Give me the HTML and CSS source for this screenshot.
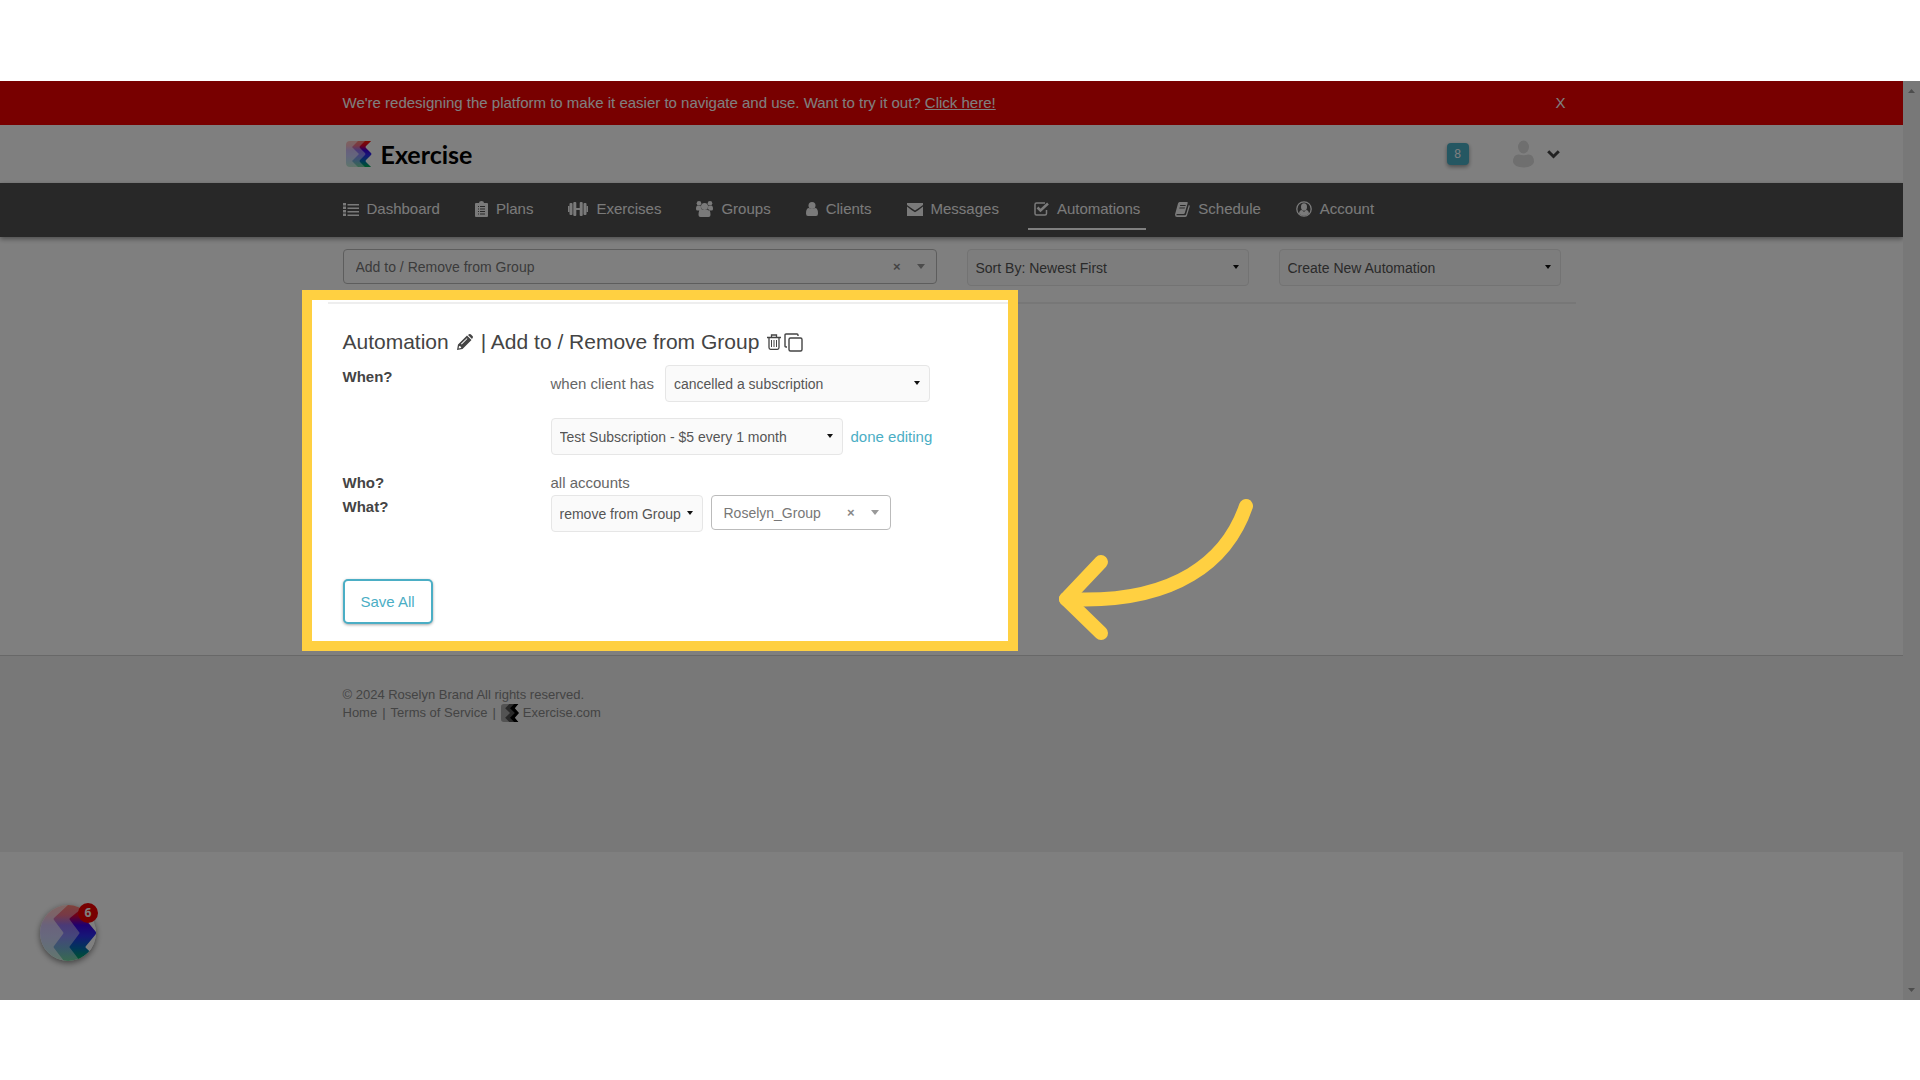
FILE: index.html
```html
<!DOCTYPE html>
<html lang="en">
<head>
<meta charset="utf-8">
<meta name="viewport" content="width=device-width, initial-scale=1">
<title>Automations</title>
<link rel="stylesheet" href="styles.css">
</head>
<body>
<svg class="defs" aria-hidden="true">
  <defs>
    <linearGradient id="brand" x1="0" y1="0" x2="0" y2="1">
      <stop offset="0" stop-color="#ff1a00"/>
      <stop offset=".18" stop-color="#e00030"/>
      <stop offset=".36" stop-color="#3d00e0"/>
      <stop offset=".55" stop-color="#2c2cf0"/>
      <stop offset=".78" stop-color="#0070b0"/>
      <stop offset="1" stop-color="#00b050"/>
    </linearGradient>
  </defs>
</svg>
<div class="app">
  <div class="page">
    <div class="banner">
      <div class="container banner-row">
        <p class="banner-text">We're redesigning the platform to make it easier to navigate and use. Want to try it out? <a href="#">Click here!</a></p>
        <button class="banner-close" type="button" aria-label="Close">X</button>
      </div>
    </div>

    <header class="header">
      <div class="container header-row">
        <a class="logo" href="#">
          <svg width="26" height="26" viewBox="0 0 26 26" fill="url(#brand)" aria-hidden="true">
            <path opacity=".25" d="M4 0H25L18 6 25 13 18 20 25 26H4Q0 26 0 22V4Q0 0 4 0Z"/>
            <path opacity=".4" d="M12 0H25L18 6 25 13 18 20 25 26H12L6 20 13 13 6 6Z"/>
            <path d="M19 0H25L20 5 Q19 6 20 7L25 12Q26 13 25 14L20 19Q19 20 20 21L25 26H19L14 21Q13 20 14 19L19 14Q20 13 19 12L14 7Q13 6 14 5Z"/>
          </svg>
          <span>Exercise</span>
        </a>
        <div class="header-tools">
          <button class="count" type="button">8</button>
          <button class="user" type="button" aria-label="User menu">
            <svg width="21" height="28" viewBox="0 0 21 28" fill="#dedede"><ellipse cx="10.500" cy="7" rx="5.500" ry="6.500"/><path d="M0 22Q0 14 6 14.500Q10 16 15 14.500Q21 14 21 22Q20 27 10.500 27.500Q1 27 0 22Z"/></svg>
            <svg width="13" height="9" viewBox="0 0 13 9" fill="none" stroke="#444" stroke-width="3"><path d="M1.200 1.200 6.500 6.500 11.800 1.200"/></svg>
          </button>
        </div>
      </div>
    </header>

    <nav class="nav">
      <div class="container nav-row">
        <a href="#"><svg width="16" height="13" viewBox="0 0 16 13" fill="currentColor"><path d="M0 0h3v2.500H0zM0 3.500h3V6H0zM0 7h3v2.500H0zM0 10.500h3V13H0zM4.500 1h11.500v1.500H4.500zM4.500 4.500h11.500v1.500H4.500zM4.500 8h11.500v1.500H4.500zM4.500 11.500h11.500v1.500H4.500z"/></svg>Dashboard</a>
        <a href="#"><svg width="13" height="16" viewBox="0 0 13 16" fill="currentColor"><path fill-rule="evenodd" d="M1 2H4Q4 0 6.500 0T9 2H12Q13 2 13 3V15Q13 16 12 16H1Q0 16 0 15V3Q0 2 1 2ZM3 5V6H4V5ZM5 5V6H10V5ZM3 7.500V8.500H4V7.500ZM5 7.500V8.500H10V7.500ZM3 10V11H4V10ZM5 10V11H10V10ZM3 12.500V13.500H4V12.500ZM5 12.500V13.500H10V12.500Z"/></svg>Plans</a>
        <a href="#"><svg width="20" height="14" viewBox="0 0 20 14" fill="currentColor"><rect y="4" width="1.500" height="6"/><rect x="1.500" y="1" width="3" height="12" rx="1"/><rect x="5.300" width="3" height="14" rx="1"/><rect x="8" y="6" width="4" height="2"/><rect x="11.700" width="3" height="14" rx="1"/><rect x="15.500" y="1" width="3" height="12" rx="1"/><rect x="18.500" y="4" width="1.500" height="6"/></svg>Exercises</a>
        <a href="#"><svg width="17" height="16" viewBox="0 0 17 16" fill="currentColor"><circle cx="3" cy="2.300" r="2.300"/><circle cx="14" cy="2.300" r="2.300"/><circle cx="8.500" cy="5.500" r="3.500"/><path d="M0 8Q0 4.300 2 4.500 3.500 5.200 4.800 4.500 4.500 7 6 8.700L4 9.500H1.500Q0 9.500 0 8ZM17 8Q17 4.300 15 4.500 13.500 5.200 12.200 4.500 12.500 7 11 8.700L13 9.500H15.500Q17 9.500 17 8ZM2.500 14Q2.500 8 5.500 8.200 8.500 10 11.500 8.200 14.500 8 14.500 14 14.500 16 12.500 16H4.500Q2.500 16 2.500 14Z"/></svg>Groups</a>
        <a href="#"><svg width="12" height="14" viewBox="0 0 12 14" fill="currentColor"><circle cx="6" cy="3.500" r="3.500"/><path d="M0 11.500Q0 6 3 6 6 8 9 6 12 6 12 11.500 12 14 10 14H2Q0 14 0 11.500Z"/></svg>Clients</a>
        <a href="#"><svg width="16" height="13" viewBox="0 0 16 13" fill="currentColor"><path d="M0 0H16V2Q12 5 8 7.500 4 5 0 2ZM0 3.500Q4 7 8 9.300 12 7 16 3.500V13H0Z"/></svg>Messages</a>
        <a class="active" href="#" aria-current="page"><svg width="15" height="14" viewBox="0 0 15 14" fill="none" stroke="currentColor"><path stroke-width="1.500" d="M12.500 8V11.500Q12.500 13 11 13H2.500Q1 13 1 11.500V2.500Q1 1 2.500 1H11"/><path stroke-width="2.500" d="M3.500 5.500 6.500 8.500 14 1.500"/></svg>Automations</a>
        <a href="#"><svg width="15" height="15" viewBox="0 0 15 15" fill="currentColor"><path fill-rule="evenodd" d="M4.500 0H12Q13 0 12.700 1L9.800 11Q9.500 12 8.500 12H2Q1 12.300 1.500 13.200H10Q10.700 13.200 11 12.400L13.800 3Q15 3 14.700 4.500L12 13.500Q11.500 15 10 15H2Q0 15 0 12.500L3 1.500Q3.500 0 4.500 0ZM5.200 3 5 4H10.500L10.800 3ZM4.500 5.500 4.200 6.500H9.700L10 5.500Z"/></svg>Schedule</a>
        <a href="#"><svg width="16" height="16" viewBox="0 0 16 16" fill="currentColor"><circle cx="8" cy="8" r="7.200" fill="none" stroke="currentColor" stroke-width="1.300"/><ellipse cx="8" cy="6" rx="3" ry="3.700"/><path d="M3 12.700Q3.200 9.300 6 9L8 11 10 9Q12.800 9.300 13 12.700 8 17 3 12.700Z"/></svg>Account</a>
      </div>
    </nav>

    <main class="container main">
      <div class="filters">
        <div class="combo combo-wide">
          <select aria-label="Automation"><option>Add to / Remove from Group</option></select>
          <button class="combo-clear" type="button" aria-label="Clear">×</button>
        </div>
        <div class="pick pick-third"><select aria-label="Sort by"><option>Sort By: Newest First</option></select></div>
        <div class="pick pick-third"><select aria-label="Create"><option>Create New Automation</option></select></div>
      </div>

      <section class="automation">
        <h1 class="title">Automation
          <button type="button" aria-label="Rename"><svg width="16" height="16" viewBox="0 0 16 16" fill="#444"><path fill-rule="evenodd" d="M0 16 1 10.500 10 1.500 14.500 6 5.500 15ZM2 12.200 1.600 14.400 3.800 14 4.300 13.200 3.500 12.500 2.800 12ZM4 9.700 4.700 10.400 10.400 4.800 9.800 4.200ZM11 1 12 0.300Q13 -.4 14 .5L15.500 2Q16.400 3 15.600 4L15 5Z"/></svg></button>
          <span>| Add to / Remove from Group</span>
          <button type="button" aria-label="Delete"><svg width="14" height="16" viewBox="0 0 14 16" fill="none" stroke="#444"><path stroke-width="1.300" d="M0 3.500H14M4.500 3.500V1H9.500V3.500M2 3.500V13.500Q2 15.300 3.500 15.300H10.500Q12 15.300 12 13.500V3.500"/><path d="M4.500 6V13M7 6V13M9.500 6V13"/></svg></button>
          <button type="button" aria-label="Duplicate"><svg width="19" height="19" viewBox="0 0 19 19" fill="none" stroke="#444" stroke-width="1.400"><rect x="5" y="5" width="13" height="13" rx="1.500"/><path d="M3 14H2Q1 14 1 13V2Q1 1 2 1H13Q14 1 14 2V3"/></svg></button>
        </h1>
        <form class="rules">
          <div class="rule">
            <strong class="rule-name">When?</strong>
            <div class="rule-body">
              <div class="line">
                <label for="event">when client has</label>
                <div class="pick pick-event"><select id="event"><option>cancelled a subscription</option></select></div>
              </div>
              <div class="line">
                <div class="pick pick-plan"><select aria-label="Subscription"><option>Test Subscription - $5 every 1 month</option></select></div>
                <a class="done" href="#">done editing</a>
              </div>
            </div>
          </div>
          <div class="rule">
            <strong class="rule-name">Who?</strong>
            <div class="rule-body">all accounts</div>
          </div>
          <div class="rule">
            <strong class="rule-name">What?</strong>
            <div class="rule-body line line-top">
              <div class="pick pick-action"><select aria-label="Action"><option>remove from Group</option></select></div>
              <div class="combo combo-group">
                <select aria-label="Group"><option>Roselyn_Group</option></select>
                <button class="combo-clear" type="button" aria-label="Clear">×</button>
              </div>
            </div>
          </div>
          <button class="save" type="button">Save All</button>
        </form>

        <div class="spotlight"></div>
        <svg class="pointer" width="202" height="148" viewBox="0 0 202 148" fill="none" stroke="#ffd041" stroke-width="14" stroke-linecap="round" stroke-linejoin="round" aria-hidden="true">
          <path d="M191 10C173 63 122 109 11 103"/>
          <path d="M46 66 11 103 46 137"/>
        </svg>
      </section>
    </main>

    <footer class="footer">
      <div class="container">
        <p>© 2024 Roselyn Brand All rights reserved.</p>
        <p class="footer-links"><a href="#">Home</a> | <a href="#">Terms of Service</a> | <a class="footer-brand" href="#"><svg width="18" height="18" viewBox="0 0 26 26" aria-hidden="true"><path opacity=".3" d="M4 0H25L18 6 25 13 18 20 25 26H4Q0 26 0 22V4Q0 0 4 0Z"/><path opacity=".5" d="M12 0H25L18 6 25 13 18 20 25 26H12L6 20 13 13 6 6Z"/><path d="M19 0H25L20 6 26 13 20 20 25 26H19L13 20 20 13 13 6Z"/></svg> Exercise.com</a></p>
      </div>
    </footer>

    <button class="chat" type="button" aria-label="Open chat">
      <svg width="56" height="56" viewBox="0 0 56 56" fill="url(#brand)" aria-hidden="true">
        <clipPath id="disc"><circle cx="28" cy="28" r="28"/></clipPath>
        <g clip-path="url(#disc)">
          <rect width="56" height="56" fill="#fff"/>
          <path opacity=".22" d="M0 0H46L30 14 46 28 30 42 46 56H0Z"/>
          <path opacity=".42" d="M28 0H46L30 14 46 28 30 42 46 56H24L14 43Q13 42 14 41L23 29Q24 28 23 27L14 15Q13 14 14 13Z"/>
          <path d="M46 0H60L46 13Q45 14 46 15L56 27V29L46 41Q45 42 46 43L60 56H40L30 43Q29 42 30 41L39 29Q40 28 39 27L30 15Q29 14 30 13Z"/>
        </g>
      </svg>
      <span class="chat-count">6</span>
    </button>
  </div>
  <div class="scrollbar" aria-hidden="true">
    <svg width="7" height="4" viewBox="0 0 7 4" fill="#9a9a9a"><path d="M0 4 3.500 0 7 4Z"/></svg>
    <svg width="7" height="4" viewBox="0 0 7 4" fill="#9a9a9a"><path d="M0 0 3.500 4 7 0Z"/></svg>
  </div>
</div>
</body>
</html>
```
FILE: styles.css
```css
* { box-sizing: border-box; }

body {
  margin: 0;
  padding: 81px 0 80px;
  background: #fff;
  color: #666;
  font: 15px/24px "Liberation Sans", Arial, sans-serif;
}

button, select { font: inherit; color: inherit; }
button { padding: 0; border: 0; background: none; }
a { color: inherit; text-decoration: none; }
p, h1 { margin: 0; }
svg { flex: none; }
.defs { position: absolute; width: 0; height: 0; }

.app {
  position: relative;
  display: flex;
  min-height: calc(100vh - 161px);
  overflow: hidden;
}
.page { flex: 1; min-width: 0; }
.container {
  max-width: 1248px;
  margin: 0 auto;
  padding: 0 15px;
}

.scrollbar {
  display: flex;
  flex-direction: column;
  align-items: center;
  justify-content: space-between;
  width: 17px;
  padding: 8px 0;
  background: #f1f1f1;
}

/* Banner */
.banner { background: #f00000; color: #fff; }
.banner-row {
  display: flex;
  justify-content: space-between;
  align-items: center;
  height: 44px;
}
.banner-text a { text-decoration: underline; }
.banner-close { margin-right: -5px; }

/* Header */
.header-row {
  display: flex;
  justify-content: space-between;
  align-items: center;
  height: 58px;
}
.logo {
  display: flex;
  align-items: center;
  gap: 9px;
  padding-left: 3px;
  color: #000;
  font: 700 25px/30px Lato, sans-serif;
}
.header-tools {
  display: flex;
  align-items: center;
  gap: 44px;
  padding-right: 1px;
}
.user { display: flex; align-items: center; gap: 13px; }
.count {
  width: 22px;
  height: 22px;
  border-radius: 4px;
  background: #4baec5;
  color: #fff;
  font-size: 12px;
  line-height: 22px;
  box-shadow: 0 2px 4px rgba(0, 0, 0, .4);
}

/* Navigation */
.nav {
  background: #505050;
  color: #f5f5f5;
  box-shadow: 0 2px 5px rgba(0, 0, 0, .4);
}
.nav-row { display: flex; gap: 23px; height: 54px; }
.nav-row a {
  display: flex;
  align-items: center;
  gap: 8px;
  height: 47px;
  padding: 7px 6px 0;
  border-bottom: 2px solid transparent;
}
.nav-row a:first-child { margin-left: -6px; }
.nav-row .active { border-color: #fff; }

/* Drop-downs */
.pick, .combo { position: relative; }
.pick select, .combo select {
  display: block;
  width: 100%;
  appearance: none;
  border-radius: 4px;
  font-size: 14px;
}
.pick select {
  height: 37px;
  padding: 0 8px;
  border: 1px solid #e6e6e6;
  background: #fafafa;
  color: #555;
}
.combo select {
  height: 35px;
  padding: 0 12px;
  border: 1px solid #bbb;
  background: #fff;
  color: #777;
}
.pick::after, .combo::after {
  content: "";
  position: absolute;
  top: 16px;
  right: 10px;
  border: 3px solid transparent;
  border-top: 4px solid #111;
  border-bottom: 0;
  pointer-events: none;
}
.combo::after {
  top: 15px;
  right: 12px;
  border-width: 5px 4px 0;
  border-top-color: #999;
}
.combo-clear {
  position: absolute;
  top: 6px;
  right: 36px;
  color: #888;
  font-size: 13px;
  font-weight: 700;
}

/* Filters */
.filters {
  display: grid;
  grid-template-columns: repeat(12, 1fr);
  column-gap: 30px;
  align-items: start;
  margin: 0 -15px;
  padding: 12px 15px 16px;
  border-bottom: 2px solid #eee;
}
.combo-wide { grid-column: span 6; }
.pick-third { grid-column: span 3; }

/* Automation */
.automation { position: relative; padding: 23px 0 31px; }
.title {
  display: flex;
  align-items: center;
  gap: 8px;
  margin-bottom: 8px;
  color: #444;
  font-size: 21px;
  font-weight: 400;
  line-height: 30px;
}
.title button { display: flex; }
.title button + button { margin-left: -5px; }
.rule {
  display: grid;
  grid-template-columns: 2fr 10fr;
  margin-right: -30px;
}
.rule-name { color: #444; }
.rule-body { min-width: 0; }
.line {
  display: flex;
  align-items: center;
  gap: 8px;
  margin-bottom: 16px;
}
.line label { margin-right: 3px; }
.line-top { align-items: flex-start; margin-bottom: 47px; }
.pick-event { width: 265px; }
.pick-plan { width: 292px; }
.pick-action { width: 152px; }
.combo-group { width: 180px; }
.done { color: #4baec5; }
.save {
  width: 90px;
  height: 45px;
  border: 2px solid #4baec5;
  border-radius: 5px;
  background: #fff;
  color: #4baec5;
  box-shadow: 0 1px 3px rgba(0, 0, 0, .35);
}

/* Dims everything outside the framed card */
.spotlight {
  position: absolute;
  z-index: 10;
  top: -14px;
  bottom: 4px;
  left: -41px;
  width: 716px;
  border: 10px solid #ffd041;
  box-shadow: 0 0 0 3000px rgba(0, 0, 0, .5);
  pointer-events: none;
}
.pointer {
  position: absolute;
  z-index: 11;
  top: 192px;
  left: 712px;
  pointer-events: none;
}

/* Footer */
.footer {
  min-height: 197px;
  padding-top: 30px;
  border-top: 1px solid #d0d0d0;
  background: #f0f0f0;
  color: #888;
  font-size: 13px;
  line-height: 18px;
}
.footer-links { display: flex; gap: 5px; }
.footer-brand { display: flex; gap: 4px; }

/* Chat launcher */
.chat {
  position: absolute;
  bottom: 39px;
  left: 40px;
  width: 56px;
  height: 56px;
  border-radius: 50%;
  box-shadow: 0 2px 6px rgba(0, 0, 0, .5);
}
.chat svg { display: block; }
.chat-count {
  position: absolute;
  top: -2px;
  right: -2px;
  width: 20px;
  height: 20px;
  border-radius: 50%;
  background: #f00000;
  color: #fff;
  font: 700 12px/20px "Noto Sans", sans-serif;
}
```
